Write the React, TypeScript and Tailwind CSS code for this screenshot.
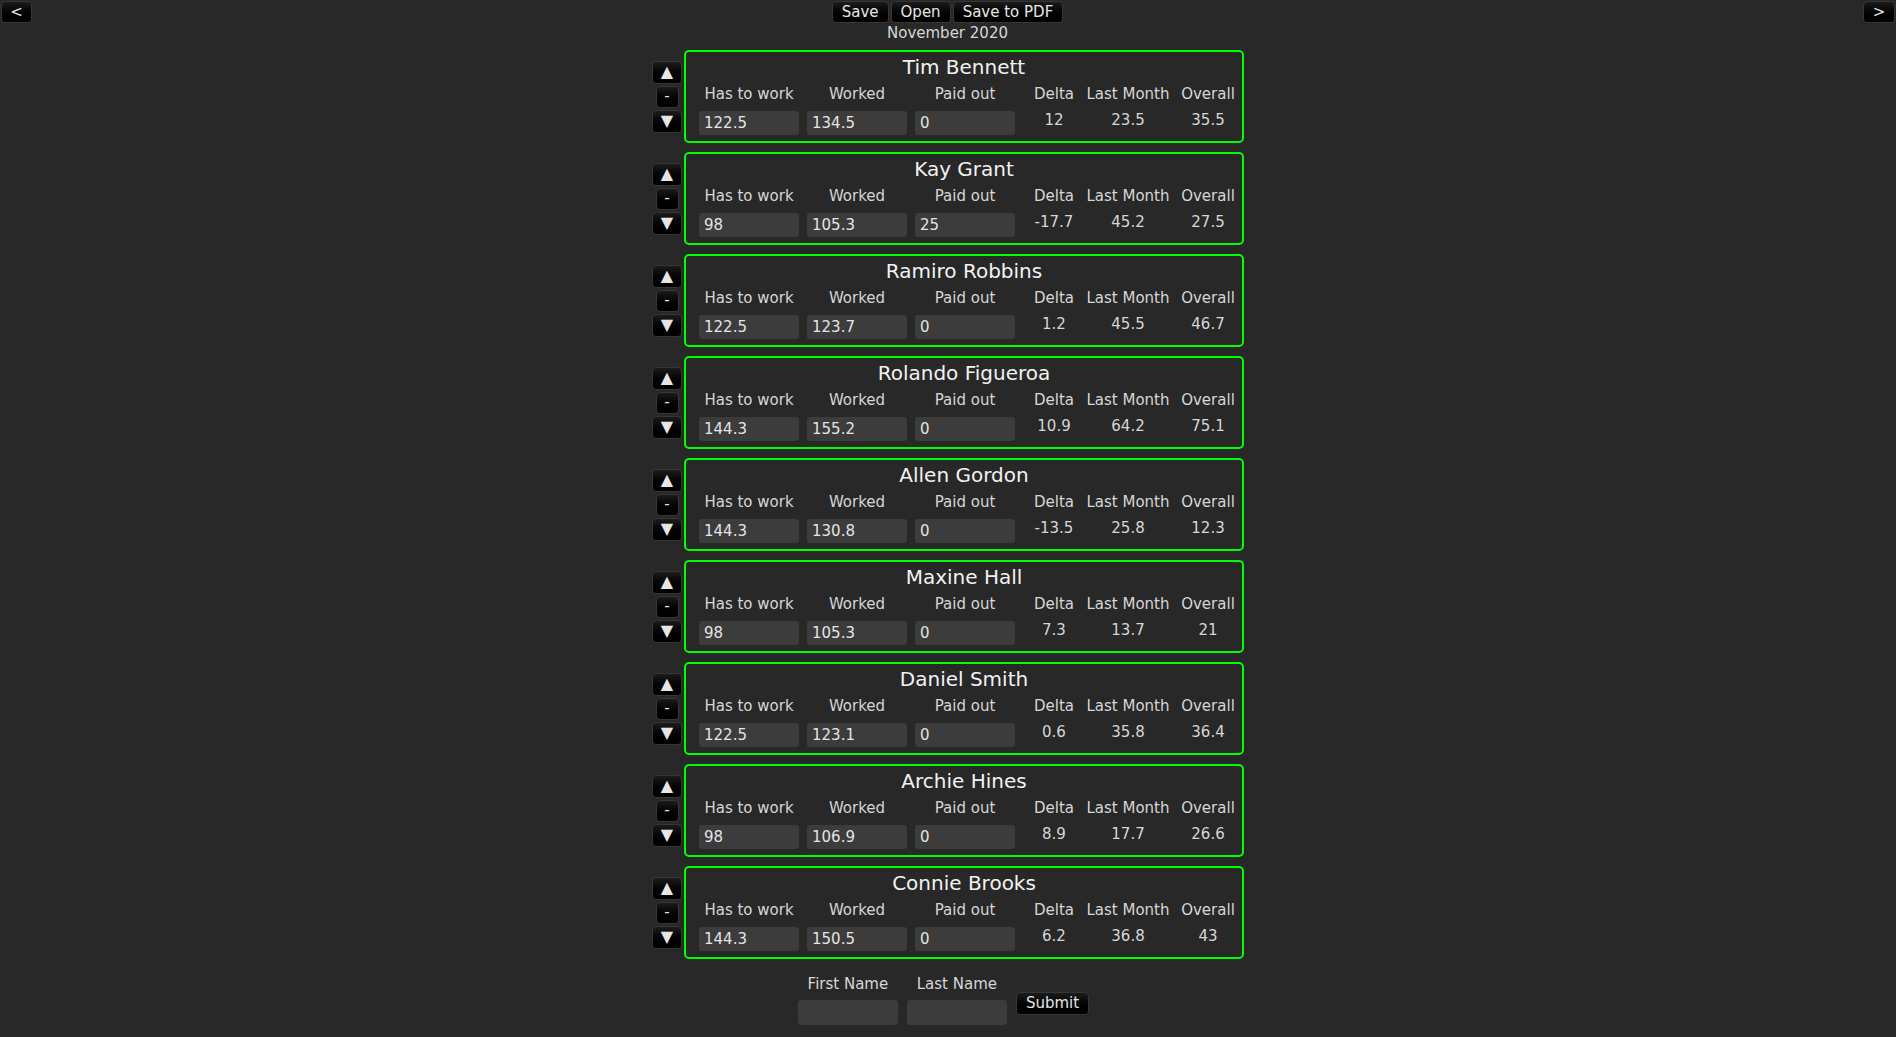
import React from "react";

type Person = {
  name: string;
  hasToWork: string;
  worked: string;
  paidOut: string;
  delta: string;
  lastMonth: string;
  overall: string;
};

const people: Person[] = [
  { name: "Tim Bennett", hasToWork: "122.5", worked: "134.5", paidOut: "0", delta: "12", lastMonth: "23.5", overall: "35.5" },
  { name: "Kay Grant", hasToWork: "98", worked: "105.3", paidOut: "25", delta: "-17.7", lastMonth: "45.2", overall: "27.5" },
  { name: "Ramiro Robbins", hasToWork: "122.5", worked: "123.7", paidOut: "0", delta: "1.2", lastMonth: "45.5", overall: "46.7" },
  { name: "Rolando Figueroa", hasToWork: "144.3", worked: "155.2", paidOut: "0", delta: "10.9", lastMonth: "64.2", overall: "75.1" },
  { name: "Allen Gordon", hasToWork: "144.3", worked: "130.8", paidOut: "0", delta: "-13.5", lastMonth: "25.8", overall: "12.3" },
  { name: "Maxine Hall", hasToWork: "98", worked: "105.3", paidOut: "0", delta: "7.3", lastMonth: "13.7", overall: "21" },
  { name: "Daniel Smith", hasToWork: "122.5", worked: "123.1", paidOut: "0", delta: "0.6", lastMonth: "35.8", overall: "36.4" },
  { name: "Archie Hines", hasToWork: "98", worked: "106.9", paidOut: "0", delta: "8.9", lastMonth: "17.7", overall: "26.6" },
  { name: "Connie Brooks", hasToWork: "144.3", worked: "150.5", paidOut: "0", delta: "6.2", lastMonth: "36.8", overall: "43" },
];

const btn =
  "flex items-center justify-center rounded-[4px] border border-[#363636] bg-linear-to-b from-[#1c1c1c] to-black text-[15px] leading-none text-[#e6e6e6]";

function Field({ value, height = "h-[24px]" }: { value: string; height?: string }) {
  return (
    <input
      readOnly
      defaultValue={value}
      className={`w-[100px] ${height} rounded-[3px] bg-[#3c3c3c] px-[5px] text-[15px] text-[#e4e4e4] outline-none`}
    />
  );
}

function Cell({ children }: { children: React.ReactNode }) {
  return <div className="flex justify-center whitespace-nowrap leading-[18px]">{children}</div>;
}

function PersonRow({ p }: { p: Person }) {
  return (
    <div className="flex items-center gap-[2px]">
      <div className="flex w-[30px] flex-col items-center gap-[2px]">
        <button type="button" className={`${btn} h-[23px] w-[30px] text-[16px]`}>▲</button>
        <button type="button" className={`${btn} h-[22px] w-[23px] text-[12px]`}>-</button>
        <button type="button" className={`${btn} h-[23px] w-[30px] text-[16px]`}>▼</button>
      </div>
      <div className="h-[93px] w-[560px] rounded-[5px] border-2 border-[#00ff00] pt-[3px]">
        <div className="text-center text-[20px] leading-[24px] text-[#f2f2f2]">{p.name}</div>
        <div className="ml-[13px] mt-[6px] grid grid-cols-[100px_100px_100px_62px_70px_74px] gap-x-2 gap-y-2 text-[15px] text-[#d6d6d6]">
          <Cell>Has to work</Cell>
          <Cell>Worked</Cell>
          <Cell>Paid out</Cell>
          <Cell>Delta</Cell>
          <Cell>Last Month</Cell>
          <Cell>Overall</Cell>
          <Field value={p.hasToWork} />
          <Field value={p.worked} />
          <Field value={p.paidOut} />
          <Cell>{p.delta}</Cell>
          <Cell>{p.lastMonth}</Cell>
          <Cell>{p.overall}</Cell>
        </div>
      </div>
    </div>
  );
}

export default function App() {
  return (
    <div
      className="h-[1037px] w-[1896px] overflow-hidden bg-[#282828] text-[#d6d6d6]"
      style={{ fontFamily: '"DejaVu Sans", Verdana, sans-serif' }}
    >
      <div className="flex items-start justify-between px-px pt-px">
        <button type="button" className={`${btn} h-[22px] w-[31px]`}>&lt;</button>
        <div className="flex flex-col items-center">
          <div className="flex gap-[2px]">
            <button type="button" className={`${btn} h-[22px] px-[9px]`}>Save</button>
            <button type="button" className={`${btn} h-[22px] px-[9px]`}>Open</button>
            <button type="button" className={`${btn} h-[22px] px-[9px]`}>Save to PDF</button>
          </div>
          <div className="mt-px text-[15px] leading-[18px] text-[#d6d6d6]">November 2020</div>
        </div>
        <button type="button" className={`${btn} h-[22px] w-[32px]`}>&gt;</button>
      </div>

      <div className="mt-[8px] flex flex-col items-center gap-[9px]">
        {people.map((p) => (
          <PersonRow key={p.name} p={p} />
        ))}
      </div>

      <div className="mt-[16px] flex items-end justify-center gap-[9px] pr-[9px] text-[15px]">
        <div className="flex flex-col items-center gap-[7px]">
          <div className="leading-[18px]">First Name</div>
          <Field value="" height="h-[25px]" />
        </div>
        <div className="flex flex-col items-center gap-[7px]">
          <div className="leading-[18px]">Last Name</div>
          <Field value="" height="h-[25px]" />
        </div>
        <button type="button" className={`${btn} mb-[10px] h-[23px] px-[9px]`}>Submit</button>
      </div>
    </div>
  );
}
